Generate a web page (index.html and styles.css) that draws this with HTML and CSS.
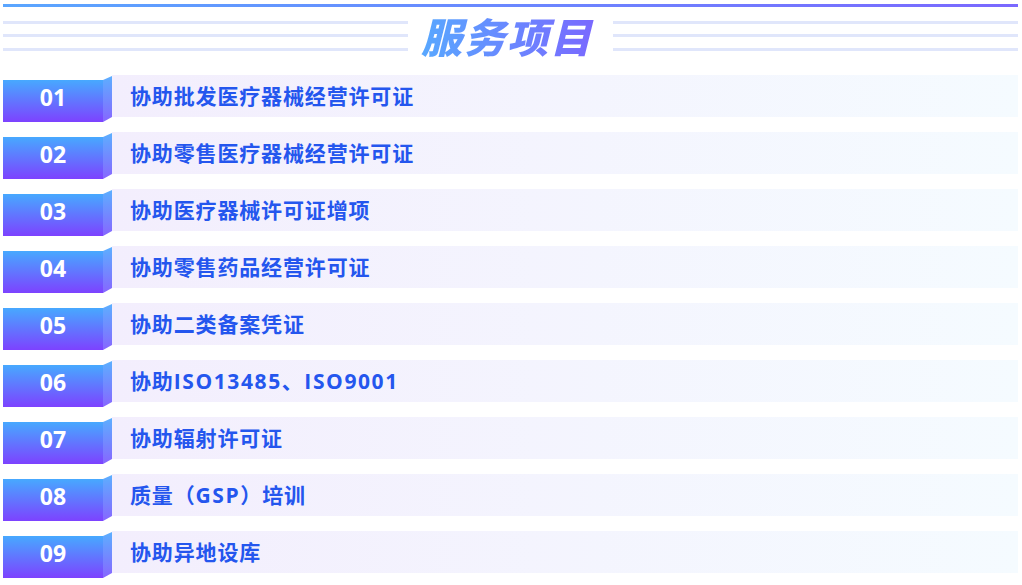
FILE: index.html
```html
<!DOCTYPE html>
<html lang="zh-CN">
<head>
<meta charset="utf-8">
<title>服务项目</title>
<link rel="stylesheet" href="styles.css">
</head>
<body>
<main class="page">
  <div class="topbar"></div>
  <header class="head">
    <div class="lines"><i></i><i></i><i></i></div>
    <h1 class="title">服务项目</h1>
    <div class="lines"><i></i><i></i><i></i></div>
  </header>
  <ul class="list">
    <li class="row"><span class="num">01</span><span class="side"></span><span class="bar">协助批发医疗器械经营许可证</span></li>
    <li class="row"><span class="num">02</span><span class="side"></span><span class="bar">协助零售医疗器械经营许可证</span></li>
    <li class="row"><span class="num">03</span><span class="side"></span><span class="bar">协助医疗器械许可证增项</span></li>
    <li class="row"><span class="num">04</span><span class="side"></span><span class="bar">协助零售药品经营许可证</span></li>
    <li class="row"><span class="num">05</span><span class="side"></span><span class="bar">协助二类备案凭证</span></li>
    <li class="row"><span class="num">06</span><span class="side"></span><span class="bar"><span>协助<span class="lat">ISO13485、ISO9001</span></span></span></li>
    <li class="row"><span class="num">07</span><span class="side"></span><span class="bar">协助辐射许可证</span></li>
    <li class="row"><span class="num">08</span><span class="side"></span><span class="bar"><span>质量（<span class="lat">GSP</span>）培训</span></span></li>
    <li class="row"><span class="num">09</span><span class="side"></span><span class="bar">协助异地设库</span></li>
  </ul>
</main>
</body>
</html>
```
FILE: styles.css
```css
* { box-sizing: border-box; }
html, body { margin: 0; padding: 0; background: #fff; }
body { font-family: "Open Sans", "Noto Sans CJK SC", sans-serif; overflow: hidden; }
.page { width: 1015px; margin: 4px 0 0 3px; }
.topbar { height: 3px; background: linear-gradient(90deg, #5aa6ff, #7a68ff); }
.head { display: flex; align-items: flex-start; height: 68px; }
.lines { flex: 1; display: flex; flex-direction: column; padding-top: 14px; }
.lines i { display: block; height: 3px; background: #e0e6fb; margin-bottom: 10px; }
.lines i:last-child { margin-top: 1px; }
.title {
  margin: 6px 17px 0 13px; width: 175px; font-size: 41px; line-height: 48px; font-weight: 900; font-style: italic;
  letter-spacing: 2px; white-space: nowrap; color: transparent;
  background: linear-gradient(90deg, #58a8ff, #7a68ff);
  -webkit-background-clip: text; background-clip: text;
}
.list { list-style: none; margin: 0; padding: 0; display: flex; flex-direction: column; gap: 10px; }
.row { display: flex; height: 47px; align-items: flex-start; }
.num {
  width: 100px; height: 42px; margin-top: 5px; padding-bottom: 9px; display: flex; align-items: center; justify-content: center;
  color: #fff; font-size: 23px; font-weight: 700;
  background: linear-gradient(180deg, #47a9ff, #7d42ff);
}
.side {
  width: 9px; height: 46px; margin-top: 1px;
  background: linear-gradient(180deg, #4aa6ff, #7a55ff);
  opacity: .9;
  clip-path: polygon(0 4px, 100% 0, 100% 41px, 0 100%);
}
.bar {
  flex: 1; height: 42px; padding-left: 18px; padding-bottom: 2px; display: flex; align-items: center;
  color: #2456ee; font-size: 21px; font-weight: 700; letter-spacing: .85px;
  background: linear-gradient(90deg, #f3eefd, #f5fbff);
}
.lat { letter-spacing: 1.6px; }
```
